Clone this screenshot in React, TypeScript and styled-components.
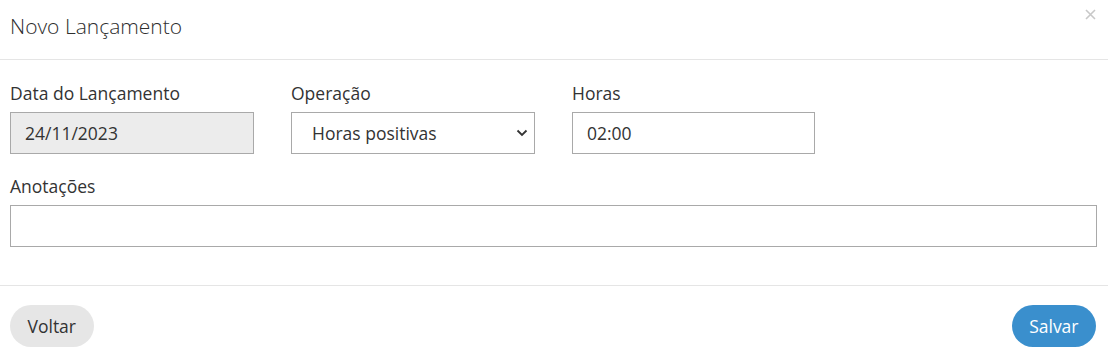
import styled, { createGlobalStyle } from "styled-components";

const GlobalStyle = createGlobalStyle`
  body {
    margin: 0;
    background: #fff;
    font-family: "Open Sans", "Noto Sans", sans-serif;
    color: #333;
  }
  * { box-sizing: border-box; }
`;

const Modal = styled.div`
  width: 1108px;
  height: 358px;
  display: flex;
  flex-direction: column;
  background: #fff;
`;

const Header = styled.div`
  height: 60px;
  display: flex;
  align-items: flex-start;
  justify-content: space-between;
  padding: 11px 10px 0 10px;
  border-bottom: 1px solid #e5e5e5;
`;

const Title = styled.h4`
  margin: 0;
  font-size: 21px;
  font-weight: 300;
  line-height: 30px;
  color: #2e2e2e;
`;

const Close = styled.button`
  border: none;
  background: none;
  padding: 0;
  margin: -4px 1px 0 0;
  width: 14px;
  height: 14px;
  display: flex;
  align-items: center;
  justify-content: center;
  cursor: pointer;
`;

const Body = styled.div`
  padding: 21px 11px 0 10px;
  height: 226px;
  border-bottom: 1px solid #e5e5e5;
`;

const Row = styled.div<{ $cols?: string }>`
  display: grid;
  grid-template-columns: ${(p) => p.$cols || "244px 244px 243px"};
  column-gap: 37px;
  margin-bottom: 20px;
`;

const Field = styled.div`
  display: flex;
  flex-direction: column;
`;

const Label = styled.label`
  font-size: 17.5px;
  line-height: 24px;
  color: #333;
  margin-bottom: 7px;
`;

const Input = styled.input`
  height: 42px;
  width: 100%;
  border: 1px solid #a9a9a9;
  border-radius: 0;
  padding: 0 14px;
  font-family: inherit;
  font-size: 17.5px;
  color: #333;
  background: #fff;
  outline: none;
  caret-color: #111;
  &:disabled {
    background: #ececec;
    color: #333;
    -webkit-text-fill-color: #333;
  }
`;

const SelectWrap = styled.div`
  position: relative;
  svg {
    position: absolute;
    right: 7px;
    top: 17px;
    pointer-events: none;
  }
`;

const Select = styled.select`
  height: 42px;
  width: 100%;
  appearance: none;
  border: 1px solid #a9a9a9;
  border-radius: 0;
  padding: 0 20px;
  font-family: inherit;
  font-size: 17.5px;
  color: #333;
  background: #fff;
  outline: none;
`;

const Footer = styled.div`
  flex: 1;
  display: flex;
  align-items: center;
  justify-content: space-between;
  padding: 8px 12px 0 10px;
`;

const Button = styled.button<{ $primary?: boolean }>`
  height: 42px;
  padding: 0 17.5px;
  border: none;
  border-radius: 21px;
  font-family: inherit;
  font-size: 17.5px;
  cursor: pointer;
  background: ${(p) => (p.$primary ? "#3a8fcd" : "#e6e6e6")};
  color: ${(p) => (p.$primary ? "#fff" : "#333")};
`;

export default function App() {
  return (
    <>
      <GlobalStyle />
      <Modal>
        <Header>
          <Title>Novo Lançamento</Title>
          <Close aria-label="Fechar">
            <svg width="11" height="11" viewBox="0 0 11 11">
              <path d="M1 1L10 10M10 1L1 10" stroke="#c8c8c8" strokeWidth="1.6" />
            </svg>
          </Close>
        </Header>
        <Body>
          <Row>
            <Field>
              <Label>Data do Lançamento</Label>
              <Input value="24/11/2023" disabled readOnly />
            </Field>
            <Field>
              <Label>Operação</Label>
              <SelectWrap>
                <Select defaultValue="pos">
                  <option value="pos">Horas positivas</option>
                  <option value="neg">Horas negativas</option>
                </Select>
                <svg width="12" height="8" viewBox="0 0 12 8">
                  <path d="M1.5 1.5L6 6L10.5 1.5" fill="none" stroke="#333" strokeWidth="1.8" />
                </svg>
              </SelectWrap>
            </Field>
            <Field>
              <Label>Horas</Label>
              <Input defaultValue="02:00" autoFocus />
            </Field>
          </Row>
          <Row $cols="1fr">
            <Field>
              <Label>Anotações</Label>
              <Input />
            </Field>
          </Row>
        </Body>
        <Footer>
          <Button>Voltar</Button>
          <Button $primary>Salvar</Button>
        </Footer>
      </Modal>
    </>
  );
}
